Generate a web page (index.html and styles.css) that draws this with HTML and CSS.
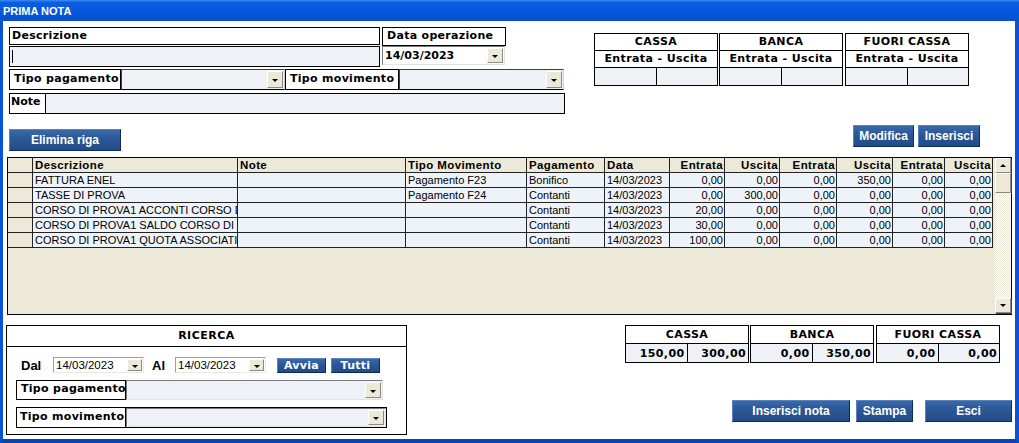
FILE: index.html
```html
<!DOCTYPE html>
<html lang="it">
<head>
    <meta charset="UTF-8">
    <meta name="viewport" content="width=device-width, initial-scale=1.0">
    <title>Prima nota</title>
    <link rel="stylesheet" href="styles.css">
</head>
<body>
<div class="window">
    <div class="titlebar">PRIMA NOTA</div>
    <div class="frame">

        <div class="top">
            <div class="form">
                <div class="row row-1">
                    <div class="lbl lbl-desc">Descrizione</div>
                    <div class="lbl lbl-data">Data operazione</div>
                </div>
                <div class="row row-2">
                    <div class="field field-desc"><span class="caret"></span></div>
                    <div class="combo combo-data"><span class="combo-text">14/03/2023</span><span class="drop"></span></div>
                </div>
                <div class="row row-3">
                    <div class="lbl lbl-tpag">Tipo pagamento</div>
                    <div class="combo combo-tpag"><span class="combo-text"></span><span class="drop"></span></div>
                    <div class="lbl lbl-tmov">Tipo movimento</div>
                    <div class="combo combo-tmov"><span class="combo-text"></span><span class="drop"></span></div>
                </div>
                <div class="row row-4 note">
                    <div class="note-lbl">Note</div>
                    <div class="note-field"></div>
                </div>
            </div>

            <div class="summary summary-top">
                <table class="sum">
                    <tr><th colspan="2">CASSA</th></tr>
                    <tr><th colspan="2">Entrata - Uscita</th></tr>
                    <tr><td></td><td></td></tr>
                </table>
                <table class="sum">
                    <tr><th colspan="2">BANCA</th></tr>
                    <tr><th colspan="2">Entrata - Uscita</th></tr>
                    <tr><td></td><td></td></tr>
                </table>
                <table class="sum sum-last">
                    <tr><th colspan="2">FUORI CASSA</th></tr>
                    <tr><th colspan="2">Entrata - Uscita</th></tr>
                    <tr><td></td><td></td></tr>
                </table>
            </div>
        </div>

        <div class="actions">
            <button class="btn btn-elimina">Elimina riga</button>
            <div class="actions-right">
                <button class="btn btn-modifica">Modifica</button>
                <button class="btn btn-inserisci">Inserisci</button>
            </div>
        </div>

        <div class="grid">
            <div class="grid-body">
                <table class="movimenti">
                    <colgroup>
                        <col class="c-sel"><col class="c-desc"><col class="c-note"><col class="c-tmov">
                        <col class="c-pag"><col class="c-data"><col class="c-e1"><col class="c-u1">
                        <col class="c-e2"><col class="c-u2"><col class="c-e3"><col class="c-u3">
                    </colgroup>
                    <thead>
                        <tr>
                            <th class="sel"></th>
                            <th>Descrizione</th>
                            <th>Note</th>
                            <th>Tipo Movimento</th>
                            <th>Pagamento</th>
                            <th>Data</th>
                            <th class="num">Entrata</th>
                            <th class="num">Uscita</th>
                            <th class="num">Entrata</th>
                            <th class="num">Uscita</th>
                            <th class="num">Entrata</th>
                            <th class="num">Uscita</th>
                        </tr>
                    </thead>
                    <tbody>
                        <tr>
                            <td class="sel"></td><td>FATTURA ENEL</td><td></td><td>Pagamento F23</td><td>Bonifico</td><td>14/03/2023</td>
                            <td class="num">0,00</td><td class="num">0,00</td><td class="num">0,00</td><td class="num">350,00</td><td class="num">0,00</td><td class="num">0,00</td>
                        </tr>
                        <tr>
                            <td class="sel"></td><td>TASSE DI PROVA</td><td></td><td>Pagamento F24</td><td>Contanti</td><td>14/03/2023</td>
                            <td class="num">0,00</td><td class="num">300,00</td><td class="num">0,00</td><td class="num">0,00</td><td class="num">0,00</td><td class="num">0,00</td>
                        </tr>
                        <tr>
                            <td class="sel"></td><td>CORSO DI PROVA1 ACCONTI CORSO DI PROVA</td><td></td><td></td><td>Contanti</td><td>14/03/2023</td>
                            <td class="num">20,00</td><td class="num">0,00</td><td class="num">0,00</td><td class="num">0,00</td><td class="num">0,00</td><td class="num">0,00</td>
                        </tr>
                        <tr>
                            <td class="sel"></td><td>CORSO DI PROVA1 SALDO CORSO DI PROVA</td><td></td><td></td><td>Contanti</td><td>14/03/2023</td>
                            <td class="num">30,00</td><td class="num">0,00</td><td class="num">0,00</td><td class="num">0,00</td><td class="num">0,00</td><td class="num">0,00</td>
                        </tr>
                        <tr>
                            <td class="sel"></td><td>CORSO DI PROVA1 QUOTA ASSOCIATIVA</td><td></td><td></td><td>Contanti</td><td>14/03/2023</td>
                            <td class="num">100,00</td><td class="num">0,00</td><td class="num">0,00</td><td class="num">0,00</td><td class="num">0,00</td><td class="num">0,00</td>
                        </tr>
                    </tbody>
                </table>
            </div>
            <div class="vscroll">
                <div class="sb-btn sb-up"></div>
                <div class="sb-thumb"></div>
                <div class="sb-track"></div>
                <div class="sb-btn sb-down"></div>
            </div>
        </div>

        <div class="bottom">
            <div class="ricerca">
                <div class="ricerca-head">RICERCA</div>
                <div class="ricerca-date">
                    <span class="date-lbl date-dal">Dal</span>
                    <div class="combo combo-small"><span class="combo-text">14/03/2023</span><span class="drop"></span></div>
                    <span class="date-lbl date-al">Al</span>
                    <div class="combo combo-small"><span class="combo-text">14/03/2023</span><span class="drop"></span></div>
                    <button class="btn btn-small btn-avvia">Avvia</button>
                    <button class="btn btn-small btn-tutti">Tutti</button>
                </div>
                <div class="ricerca-row ricerca-tpag">
                    <div class="lbl lbl-r">Tipo pagamento</div>
                    <div class="combo combo-r"><span class="combo-text"></span><span class="drop"></span></div>
                </div>
                <div class="ricerca-row ricerca-tmov">
                    <div class="lbl lbl-r">Tipo movimento</div>
                    <div class="combo combo-r"><span class="combo-text"></span><span class="drop"></span></div>
                </div>
            </div>

            <div class="bottom-right">
                <div class="summary summary-bottom">
                    <table class="sum">
                        <tr><th colspan="2">CASSA</th></tr>
                        <tr><td>150,00</td><td>300,00</td></tr>
                    </table>
                    <table class="sum">
                        <tr><th colspan="2">BANCA</th></tr>
                        <tr><td>0,00</td><td>350,00</td></tr>
                    </table>
                    <table class="sum sum-last">
                        <tr><th colspan="2">FUORI CASSA</th></tr>
                        <tr><td>0,00</td><td>0,00</td></tr>
                    </table>
                </div>
                <div class="bottom-buttons">
                    <button class="btn btn-nota">Inserisci nota</button>
                    <button class="btn btn-stampa">Stampa</button>
                    <button class="btn btn-esci">Esci</button>
                </div>
            </div>
        </div>

    </div>
</div>
</body>
</html>
```

FILE: styles.css
```css
* {
    box-sizing: border-box;
}
body {
    margin: 0;
    background: #ffffff;
    font-family: "DejaVu Sans", Verdana, sans-serif;
    color: #000;
}
.window {
    width: 1019px;
    height: 443px;
    display: flex;
    flex-direction: column;
    overflow: hidden;
}
.titlebar {
    height: 21px;
    padding: 3px 0 0 3px;
    background: linear-gradient(#3d8af2 0, #0b5ee0 12%, #0656dc 55%, #0a4fcb 100%);
    color: #ffffff;
    font: bold 11px "Liberation Sans", Arial, sans-serif;
    line-height: 16px;
}
.frame {
    flex: 1;
    background: #ffffff;
    border-left: 3px solid #0a53d4;
    border-right: 4px solid #0a53d4;
    border-bottom: 4px solid #0744b5;
    padding: 6px 3px 0 6px;
}

/* ---------- top form ---------- */
.top {
    display: flex;
    align-items: flex-start;
}
.form {
    width: 557px;
}
.row {
    display: flex;
}
.lbl {
    border: 1px solid #000;
    background: #fff;
    font-size: 11px;
    font-weight: bold;
    letter-spacing: 0.3px;
    padding-left: 2px;
    white-space: nowrap;
    overflow: hidden;
}
.row-1 {
    align-items: flex-start;
}
.row-1 .lbl {
    line-height: 16px;
}
.lbl-desc {
    width: 371px;
    height: 18px;
    margin-right: 2px;
}
.lbl-data {
    width: 124px;
    height: 19px;
    padding-left: 4px;
}
.row-2 {
    height: 21px;
    align-items: flex-start;
}
.field-desc {
    width: 371px;
    height: 21px;
    margin-right: 2px;
    border: 1px solid #000;
    background: #eef2f7;
    padding: 3px 0 0 2px;
}
.caret {
    display: block;
    width: 1px;
    height: 13px;
    background: #000;
}
.combo {
    display: flex;
    align-items: stretch;
    border: 1px solid;
    border-color: #7a7a7a #e4e4e4 #e4e4e4 #7a7a7a;
    background: #eef2f7;
    padding: 1px;
}
.combo-text {
    flex: 1;
    padding-left: 2px;
    white-space: nowrap;
    overflow: hidden;
}
.drop {
    width: 16px;
    background: #ece9d8;
    border: 1px solid;
    border-color: #ffffff #8a8a80 #8a8a80 #ffffff;
    display: flex;
    align-items: center;
    justify-content: center;
}
.drop::after {
    content: "";
    border-left: 3px solid transparent;
    border-right: 3px solid transparent;
    border-top: 3px solid #000;
    margin-top: 2px;
}
.combo-data {
    width: 123px;
    height: 19px;
    background: #ffffff;
    font-size: 11px;
    font-weight: bold;
    line-height: 15px;
}
.combo-data .combo-text {
    padding-left: 1px;
}
.row-3 {
    height: 21px;
    margin-top: 2px;
}
.row-3 .lbl {
    height: 21px;
    line-height: 17px;
    padding-left: 4px;
}
.lbl-tpag {
    width: 112px;
}
.combo-tpag {
    width: 164px;
    border-color: #404040 #d0d0d0 #000 #404040;
}
.lbl-tmov {
    width: 114px;
}
.combo-tmov {
    width: 165px;
    border-color: #404040 #d0d0d0 #000 #404040;
}
.note {
    height: 21px;
    width: 556px;
    margin-top: 3px;
    border: 1px solid #000;
}
.note-lbl {
    width: 36px;
    border-right: 1px solid #000;
    font-size: 11px;
    font-weight: bold;
    line-height: 16px;
    padding-left: 1px;
}
.note-field {
    flex: 1;
    background: #eef2f7;
}

/* ---------- summary boxes ---------- */
.summary {
    display: flex;
    align-items: flex-start;
    gap: 1px;
}
.summary-top {
    margin: 6px 0 0 28px;
}
.sum {
    width: 124px;
    border-collapse: collapse;
    border: 1px solid #000;
    font-size: 11px;
    font-weight: bold;
    letter-spacing: 0.4px;
}
.sum-last {
    margin-left: 1px;
}
.sum th {
    border: 1px solid #000;
    height: 17px;
    padding: 0;
    text-align: center;
    background: #fff;
    line-height: 14px;
}
.sum td {
    border: 1px solid #000;
    height: 18px;
    width: 50%;
    padding: 0 1px 0 0;
    background: #eef2f7;
    text-align: right;
    line-height: 15px;
}

/* ---------- buttons ---------- */
.btn {
    display: block;
    padding: 0;
    border: 1px solid;
    border-color: #5b82bd #0d2b58 #0d2b58 #5b82bd;
    background: linear-gradient(#3a69aa, #2a5795 45%, #224c88);
    color: #ffffff;
    font: bold 12px "Liberation Sans", Arial, sans-serif;
    text-align: center;
    cursor: pointer;
}
.actions {
    display: flex;
    justify-content: space-between;
    height: 26px;
    margin-top: 11px;
}
.btn-elimina {
    align-self: flex-end;
    width: 112px;
    height: 22px;
}
.actions-right {
    display: flex;
    align-items: flex-start;
    gap: 4px;
    margin-right: 32px;
}
.btn-modifica {
    width: 61px;
    height: 22px;
}
.btn-inserisci {
    width: 62px;
    height: 22px;
}

/* ---------- grid ---------- */
.grid {
    display: flex;
    width: 1005px;
    height: 158px;
    margin: 6px 0 0 -2px;
    border: 1px solid #000;
    background: #ece9d8;
}
.grid-body {
    width: 987px;
    overflow: hidden;
}
.movimenti {
    width: 985px;
    table-layout: fixed;
    border-collapse: separate;
    border-spacing: 0;
    font: 11px "Liberation Sans", Arial, sans-serif;
}
.c-sel { width: 25px; }
.c-desc { width: 205px; }
.c-note { width: 168px; }
.c-tmov { width: 121px; }
.c-pag { width: 78px; }
.c-data { width: 65px; }
.c-e1 { width: 55px; }
.c-u1 { width: 55px; }
.c-e2 { width: 57px; }
.c-u2 { width: 56px; }
.c-e3 { width: 52px; }
.c-u3 { width: 48px; }
.movimenti th,
.movimenti td {
    height: 15px;
    padding: 0 1px 0 2px;
    border-right: 1px solid #222;
    border-bottom: 1px solid #222;
    line-height: 14px;
    white-space: nowrap;
    overflow: hidden;
    text-align: left;
}
.movimenti th {
    background: #ece9d8;
    font-size: 11.5px;
    font-weight: bold;
    letter-spacing: 0.4px;
}
.movimenti td {
    background: #eef3f9;
}
.movimenti .sel {
    background: #ece9d8;
}
.movimenti .num {
    text-align: right;
}
.vscroll {
    width: 16px;
    display: flex;
    flex-direction: column;
    padding-bottom: 1px;
}
.sb-btn,
.sb-thumb {
    background: #ece9d8;
    border: 1px solid;
    border-color: #ffffff #8a8a80 #8a8a80 #ffffff;
    box-shadow: 1px 1px 0 #404040;
    display: flex;
    align-items: center;
    justify-content: center;
}
.sb-btn {
    height: 15px;
}
.sb-thumb {
    height: 20px;
}
.sb-up::after {
    content: "";
    border-left: 3px solid transparent;
    border-right: 3px solid transparent;
    border-bottom: 3px solid #000;
}
.sb-down::after {
    content: "";
    border-left: 3px solid transparent;
    border-right: 3px solid transparent;
    border-top: 3px solid #000;
}
.sb-track {
    flex: 1;
    background: repeating-conic-gradient(#ffffff 0 25%, #ece9d8 0 50%) 0 0 / 2px 2px;
}

/* ---------- bottom ---------- */
.bottom {
    display: flex;
    align-items: flex-start;
    margin-top: 10px;
}
.ricerca {
    width: 401px;
    height: 110px;
    margin-left: -3px;
    border: 1px solid #000;
}
.ricerca-head {
    height: 21px;
    border-bottom: 1px solid #000;
    text-align: center;
    font-size: 11px;
    font-weight: bold;
    letter-spacing: 0.5px;
    line-height: 19px;
}
.ricerca-date {
    display: flex;
    align-items: center;
    height: 16px;
    margin-top: 10px;
    padding-left: 14px;
}
.date-lbl {
    font: bold 13px "Liberation Sans", Arial, sans-serif;
}
.date-dal {
    width: 32px;
}
.date-al {
    width: 23px;
    margin-left: 8px;
}
.combo-small {
    width: 91px;
    height: 16px;
    padding: 0;
    background: #ffffff;
    border-color: #a0a0a0 #e8e8e8 #e8e8e8 #a0a0a0;
    font: 11.5px "Liberation Sans", Arial, sans-serif;
    line-height: 14px;
}
.combo-small .drop {
    width: 15px;
    margin: 1px 1px 1px 0;
}
.btn-small {
    width: 49px;
    height: 15px;
    font: bold 11px "DejaVu Sans", Verdana, sans-serif;
    letter-spacing: 0.3px;
    line-height: 13px;
}
.btn-avvia {
    margin-left: 11px;
}
.btn-tutti {
    margin-left: 5px;
}
.ricerca-row {
    display: flex;
    margin-left: 9px;
}
.ricerca-tpag {
    margin-top: 7px;
    height: 20px;
}
.ricerca-tmov {
    margin-top: 7px;
    height: 21px;
    width: 371px;
    border: 1px solid #000;
}
.lbl-r {
    width: 110px;
    line-height: 16px;
    padding-left: 4px;
}
.ricerca-tmov .lbl-r {
    border-width: 0 1px 0 0;
    width: 109px;
    padding-left: 3px;
    line-height: 17px;
}
.combo-r {
    flex: 1;
}
.ricerca-tpag .combo-r {
    flex: none;
    width: 257px;
}
.bottom-right {
    flex: 1;
    display: flex;
    flex-direction: column;
}
.summary-bottom {
    margin-left: 218px;
}
.summary-bottom .sum th {
    height: 18px;
}
.summary-bottom .sum td {
    height: 19px;
    padding-right: 2px;
}
.bottom-buttons {
    display: flex;
    justify-content: flex-end;
    margin-top: 37px;
}
.btn-nota {
    width: 118px;
    height: 22px;
}
.btn-stampa {
    width: 57px;
    height: 22px;
    margin-left: 6px;
}
.btn-esci {
    width: 87px;
    height: 22px;
    margin-left: 12px;
}
```
